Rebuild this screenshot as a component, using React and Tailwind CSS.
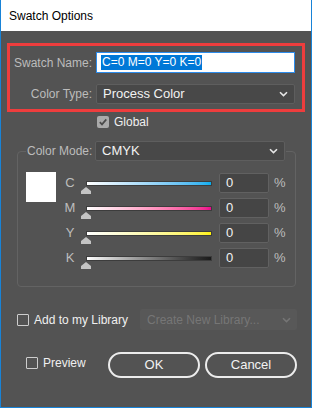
import React from 'react';

const font = { fontFamily: '"Liberation Sans", Arial, sans-serif' };

const Chevron = ({ color = '#e6e6e6' }) => (
  <svg width="9" height="6" viewBox="0 0 9 6" fill="none">
    <path d="M1 1.2 L4.5 4.6 L8 1.2" stroke={color} strokeWidth="1.6" />
  </svg>
);

const Thumb = () => (
  <svg width="10" height="7" viewBox="0 0 10 7">
    <polygon points="5,0 10,4 10,7 0,7 0,4" fill="#c4c4c4" />
  </svg>
);

const Checkbox = ({ checked = false }) =>
  checked ? (
    <div className="w-[12px] h-[12px] rounded-[2px] bg-[#aaaaaa] flex items-center justify-center shrink-0">
      <svg width="10" height="10" viewBox="0 0 10 10" fill="none">
        <path d="M1.8 5.2 L4 7.4 L8.3 2.4" stroke="#4a4a4a" strokeWidth="1.7" />
      </svg>
    </div>
  ) : (
    <div className="w-[12px] h-[12px] border border-[#cdcdcd] rounded-[1px] shrink-0" />
  );

const sliders = [
  { key: 'C', gradient: 'bg-gradient-to-r from-white to-[#00aeef]' },
  { key: 'M', gradient: 'bg-gradient-to-r from-white to-[#ec008c]' },
  { key: 'Y', gradient: 'bg-gradient-to-r from-white to-[#fff200]' },
  { key: 'K', gradient: 'bg-gradient-to-r from-white to-[#1a1a1a]' },
];

const SliderRow = ({ label, gradient }) => (
  <div className="flex items-center h-[20px]">
    <div className="w-[12px] ml-[8px] text-center text-[13px] text-[#bdbdbd]">{label}</div>
    <div className="relative ml-[10px] w-[126px] h-[5px]">
      <div className={`w-full h-full border border-[#3c3c3c] ${gradient}`} />
      <div className="absolute left-[-5px] top-[6px] leading-none">
        <Thumb />
      </div>
    </div>
    <div className="ml-[7px] w-[50px] h-[20px] bg-[#454545] border border-[#616161] rounded-[2px] flex items-center pl-[6px] text-[13px] text-[#f2f2f2]">
      0
    </div>
    <div className="ml-[5px] text-[13px] text-[#bdbdbd]">%</div>
  </div>
);

export default function App() {
  return (
    <div
      className="w-[312px] h-[408px] flex flex-col bg-[#535353] border-x border-b border-[#1883d7] overflow-hidden whitespace-nowrap"
      style={font}
    >
      {/* Title bar */}
      <div className="h-[31px] bg-white flex items-center pl-[8px] text-[12px] text-black shrink-0">
        Swatch Options
      </div>

      {/* Highlighted name/type block */}
      <div className="mt-[12px] ml-[6px] w-[298px] border-[3px] border-[#ee3d3d] pt-[6px] pb-[5px]">
        <div className="flex items-center">
          <div className="w-[82px] text-right text-[12px] text-[#bcbcbc]">Swatch Name:</div>
          <div className="ml-[4px] w-[199px] h-[21px] bg-white border border-[#2d8ceb] flex items-center pl-[4px]">
            <span className="bg-[#0078d7] text-white text-[12px] leading-[15px] px-[1px]">C=0 M=0 Y=0 K=0</span>
          </div>
        </div>
        <div className="flex items-center mt-[11px]">
          <div className="w-[82px] text-right text-[12px] text-[#bcbcbc]">Color Type:</div>
          <div className="ml-[4px] w-[199px] h-[20px] bg-[#484848] border border-[#5e5e5e] rounded-[2px] flex items-center justify-between pl-[6px] pr-[6px] text-[13px] text-[#f2f2f2]">
            <span>Process Color</span>
            <Chevron />
          </div>
        </div>
      </div>

      {/* Global */}
      <div className="flex items-center mt-[4px] ml-[96px] h-[12px]">
        <Checkbox checked />
        <span className="ml-[5px] text-[12px] text-[#f0f0f0]">Global</span>
      </div>

      {/* Color mode group */}
      <fieldset className="mt-[13px] ml-[16px] w-[279px] border border-[#636363] rounded-[4px] pb-[18px]">
        <legend className="ml-[8px] px-[1px]">
          <div className="flex items-center h-[20px]">
            <div className="w-[65px] shrink-0 text-[12px] text-[#bcbcbc]">Color Mode:</div>
            <div className="ml-[3px] w-[190px] h-[20px] bg-[#484848] border border-[#5e5e5e] rounded-[2px] flex items-center justify-between pl-[6px] pr-[6px] text-[13px] text-[#f2f2f2]">
              <span>CMYK</span>
              <Chevron />
            </div>
          </div>
        </legend>
        <div className="flex mt-[11px] pl-[8px]">
          <div className="w-[30px] h-[30px] bg-white shrink-0" />
          <div className="flex flex-col gap-[5px] mt-[1px]">
            {sliders.map((s) => (
              <SliderRow key={s.key} label={s.key} gradient={s.gradient} />
            ))}
          </div>
        </div>
      </fieldset>

      {/* Library */}
      <div className="flex items-center mt-[22px] h-[21px]">
        <div className="ml-[16px]">
          <Checkbox />
        </div>
        <span className="ml-[5px] text-[12px] text-[#f0f0f0]">Add to my Library</span>
        <div className="ml-auto mr-[14px] w-[157px] h-[21px] bg-[#585858] rounded-[2px] flex items-center justify-between pl-[7px] pr-[6px] text-[12px] text-[#767676]">
          <span>Create New Library...</span>
          <Chevron color="#757575" />
        </div>
      </div>

      {/* Preview + buttons */}
      <div className="flex items-start mt-[22px]">
        <div className="flex items-center ml-[25px] mt-[4px] h-[13px]">
          <Checkbox />
          <span className="ml-[5px] text-[12px] text-[#f0f0f0]">Preview</span>
        </div>
        <div className="ml-auto mr-[14px] flex gap-[5px]">
          <button className="w-[92px] h-[26px] rounded-full border-2 border-[#ececec] text-[13px] text-[#f2f2f2]">
            OK
          </button>
          <button className="w-[92px] h-[26px] rounded-full border-2 border-[#ececec] text-[13px] text-[#f2f2f2]">
            Cancel
          </button>
        </div>
      </div>
    </div>
  );
}
